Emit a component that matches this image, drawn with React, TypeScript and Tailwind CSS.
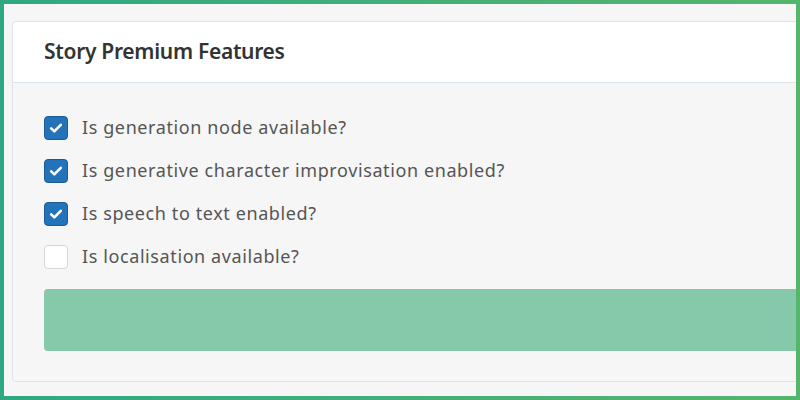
import { useState } from "react";

const FEATURES = [
  { key: "generationNode", label: "Is generation node available?", initial: true },
  { key: "improvisation", label: "Is generative character improvisation enabled?", initial: true },
  { key: "speechToText", label: "Is speech to text enabled?", initial: true },
  { key: "localisation", label: "Is localisation available?", initial: false },
];

function CheckMark() {
  return (
    <svg viewBox="0 0 16 16" className="w-[16px] h-[16px]" fill="none">
      <path d="M3.2 8.4l3.1 3 6.5-6.6" stroke="white" strokeWidth="2.6" strokeLinecap="round" strokeLinejoin="round" />
    </svg>
  );
}

export default function App() {
  const [checked, setChecked] = useState<Record<string, boolean>>(
    Object.fromEntries(FEATURES.map((f) => [f.key, f.initial]))
  );

  return (
    <div className="w-[800px] h-[400px] p-[4px] bg-gradient-to-r from-[#2ea883] to-[#55b56d]">
      <div className="w-full h-full bg-[#f6f6f6] overflow-hidden pl-[8px] pt-[17px]">
        <div
          className="w-[840px] border border-[#dde3ea] rounded-[4px] bg-[#f6f6f6]"
          style={{ fontFamily: "'Noto Sans', 'Open Sans', sans-serif" }}
        >
          <div className="h-[61px] bg-white border-b border-[#dde3ea] rounded-t-[4px] flex items-center px-[31px]">
            <h2 className="text-[21px] font-semibold text-[#333333] tracking-[-0.3px]">Story Premium Features</h2>
          </div>
          <div className="pt-[33px] pb-[30px] pl-[31px] flex flex-col">
            <div className="flex flex-col gap-[20px]">
              {FEATURES.map((f) => (
                <label key={f.key} className="flex items-center gap-[14px] cursor-pointer h-[23px]">
                  <input
                    type="checkbox"
                    className="sr-only"
                    checked={checked[f.key]}
                    onChange={(e) => setChecked((c) => ({ ...c, [f.key]: e.target.checked }))}
                  />
                  <span
                    className={
                      checked[f.key]
                        ? "w-[24px] h-[24px] rounded-[4px] bg-[#2273b9] border border-[#1b5c95] flex items-center justify-center"
                        : "w-[24px] h-[24px] rounded-[4px] bg-white border border-[#d3d7dc]"
                    }
                  >
                    {checked[f.key] && <CheckMark />}
                  </span>
                  <span className="text-[18px] tracking-[0.6px] text-[#555555]">{f.label}</span>
                </label>
              ))}
            </div>
            <button type="button" className="mt-[21px] h-[62px] rounded-[4px] bg-[#86c8aa]" />
          </div>
        </div>
      </div>
    </div>
  );
}
